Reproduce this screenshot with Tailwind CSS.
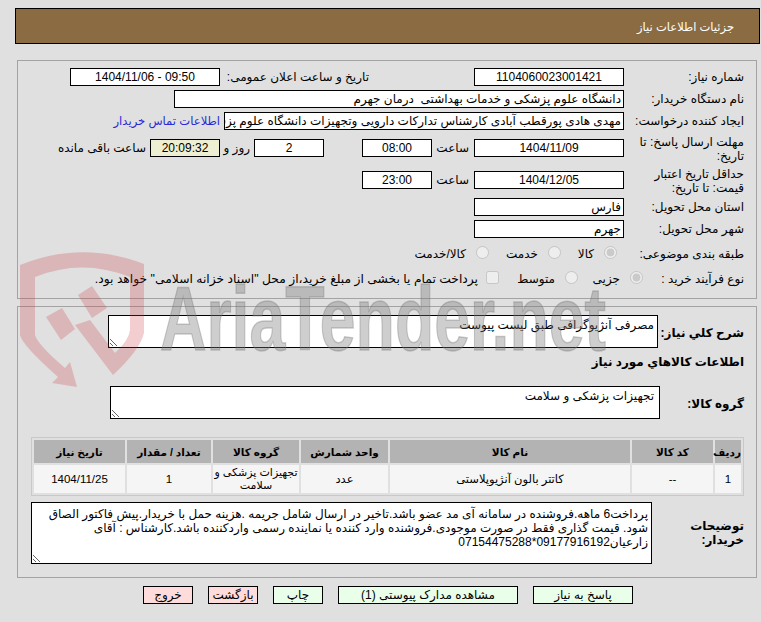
<!DOCTYPE html>
<html lang="fa" dir="rtl">
  <head>
    <meta charset="UTF-8" />
    <title>جزئیات اطلاعات نیاز</title>
    <script src="https://cdn.jsdelivr.net/npm/@tailwindcss/browser@4"></script>
  </head>
  <body class="relative h-[622px] w-[761px] overflow-hidden bg-[#e0e0e0] font-['Liberation_Sans','DejaVu_Sans',sans-serif] text-[12px] leading-[14px] text-black">
    <!-- watermark, sits over the form like in the original -->
    <svg class="pointer-events-none absolute left-0 top-0 z-10" width="761" height="622" viewBox="0 0 761 622">
      <path fill="#c8333a" fill-opacity="0.24" d="M20 265 Q82 240 144 264 L144 333 Q140 350 113 375 L75 325 L90 320 L115 353 Q129 340 130 330 L130 277 Q82 258 35 277 L35 335 Q38 345 65 368 L70 362 L77 387 L52 383 L58 377 Q22 345 20 335 Z" />
      <path fill="#c8333a" fill-opacity="0.24" d="M46 317 L62 308 L75 329 L61 340 Z" />
      <path fill="#c8333a" fill-opacity="0.24" d="M78 295 L92 286 L107 308 L92 318 Z" />
      <text x="160" y="350" direction="ltr" text-anchor="start" textLength="446" lengthAdjust="spacingAndGlyphs" font-family="Liberation Sans" font-weight="700" font-size="90" fill="#777777" fill-opacity="0.36" stroke="#777777" stroke-opacity="0.36" stroke-width="1.5">AriaTender.net</text>
    </svg>

    <header class="ml-[15px] mr-[1px] mt-[8px] flex h-[36px] items-center border border-black bg-[#8b6c42] pr-[25px] pt-[2px] text-[11.5px] text-white">جزئیات اطلاعات نیاز</header>

    <main class="ml-[17px] mr-[4px] mt-[16px]">
      <section class="h-[239px] border border-[#a3a3a3] pr-[12px] pt-[7px]">
        <div class="flex h-[18px] items-center">
          <label class="w-[120px]">شماره نیاز:</label>
          <div class="h-[18px] w-[150px] border border-black bg-white text-center leading-[16px]">1104060023001421</div>
          <label class="mr-[105px] w-[149px]">تاریخ و ساعت اعلان عمومی:</label>
          <div class="h-[18px] w-[150px] border border-black bg-white text-center leading-[16px]" dir="ltr">1404/11/06 - 09:50</div>
        </div>
        <div class="mt-[4px] flex h-[18px] items-center">
          <label class="w-[120px]">نام دستگاه خریدار:</label>
          <div class="h-[18px] w-[450px] whitespace-pre border border-black bg-white px-[2px] leading-[16px]">دانشگاه علوم پزشکی و خدمات بهداشتی  درمان جهرم</div>
        </div>
        <div class="mt-[4px] flex h-[18px] items-center">
          <label class="w-[120px]">ایجاد کننده درخواست:</label>
          <div class="h-[18px] w-[400px] overflow-hidden whitespace-nowrap border border-black bg-white px-[2px] leading-[16px]">مهدی هادی پورقطب آبادی کارشناس تدارکات دارویی وتجهیزات دانشگاه علوم پزشکی جهرم</div>
          <a class="mr-[4px] text-[11.6px] text-[#2a2ad8]">اطلاعات تماس خریدار</a>
        </div>
        <div class="mt-[9px] flex h-[32px] items-start">
          <label class="-mt-[4px] w-[120px]">مهلت ارسال پاسخ: تا<br />تاریخ:</label>
          <div class="h-[18px] w-[150px] border border-black bg-white text-center leading-[16px]">1404/11/09</div>
          <label class="w-[42px] pr-[5px] leading-[18px]">ساعت</label>
          <div class="h-[18px] w-[70px] border border-black bg-white text-center leading-[16px]">08:00</div>
          <div class="mr-[38px] h-[18px] w-[70px] border border-black bg-white text-center leading-[16px]">2</div>
          <label class="w-[34px] pr-[4px] leading-[18px]">روز و</label>
          <div class="h-[18px] w-[70px] border border-black bg-[#eeeed2] text-center leading-[16px]">20:09:32</div>
          <label class="mr-[4px] leading-[18px]">ساعت باقی مانده</label>
        </div>
        <div class="flex h-[27px] items-start">
          <label class="-mt-[4px] w-[120px]">حداقل تاریخ اعتبار<br />قیمت: تا تاریخ:</label>
          <div class="h-[18px] w-[150px] border border-black bg-white text-center leading-[16px]">1404/12/05</div>
          <label class="w-[42px] pr-[5px] leading-[18px]">ساعت</label>
          <div class="h-[18px] w-[70px] border border-black bg-white text-center leading-[16px]">23:00</div>
        </div>
        <div class="flex h-[18px] items-center">
          <label class="w-[120px]">استان محل تحویل:</label>
          <div class="h-[18px] w-[150px] border border-black bg-white px-[2px] leading-[16px]">فارس</div>
        </div>
        <div class="mt-[4px] flex h-[18px] items-center">
          <label class="w-[120px]">شهر محل تحویل:</label>
          <div class="h-[18px] w-[150px] border border-black bg-white px-[2px] leading-[16px]">جهرم</div>
        </div>
        <div class="mt-[7px] flex h-[18px] items-center">
          <label class="w-[127px]">طبقه بندی موضوعی:</label>
          <span class="flex w-[56px] items-center gap-[10px]"><input type="radio" name="cat" disabled checked class="-mt-[3px] size-[13px]" />کالا</span>
          <span class="flex w-[72px] items-center gap-[10px]"><input type="radio" name="cat" disabled class="-mt-[3px] size-[13px]" />خدمت</span>
          <span class="flex items-center gap-[10px]"><input type="radio" name="cat" disabled class="-mt-[3px] size-[13px]" />کالا/خدمت</span>
        </div>
        <div class="mt-[7px] flex h-[18px] items-center">
          <label class="w-[101px]">نوع فرآیند خرید :</label>
          <span class="flex w-[65px] items-center gap-[10px]"><input type="radio" name="kind" disabled checked class="-mt-[3px] size-[13px]" />جزیی</span>
          <span class="flex w-[79px] items-center gap-[10px]"><input type="radio" name="kind" disabled class="-mt-[3px] size-[13px]" />متوسط</span>
          <span class="flex items-center gap-[8px] whitespace-nowrap text-[12.3px]"><input type="checkbox" disabled class="-mt-[4px] size-[13px]" />پرداخت تمام یا بخشی از مبلغ خرید،از محل "اسناد خزانه اسلامی" خواهد بود.</span>
        </div>
      </section>

      <section class="mt-[7px] h-[272px] border border-[#a3a3a3] pr-[12px] pt-[8px]">
        <div class="flex items-center">
          <label class="w-[86px] pt-[3px] font-bold">شرح کلي نیاز:</label>
          <textarea readonly class="h-[33px] w-[550px] border border-black bg-white px-[3px] pt-[2px]">مصرفی آنژیوگرافی طبق لیست پیوست</textarea>
        </div>
        <h2 class="mt-[6px] h-[16px] font-bold leading-[16px]">اطلاعات کالاهاي مورد نیاز</h2>
        <div class="mt-[16px] flex items-center">
          <label class="w-[84px] pt-[3px] font-bold">گروه کالا:</label>
          <textarea readonly class="h-[33px] w-[550px] border border-black bg-white px-[5px] pt-[2px]">تجهیزات پزشکی و سلامت</textarea>
        </div>
        <table class="mt-[18px] w-[713px] table-fixed border-separate border-spacing-[2px] border border-[#c9c9c9] text-center text-[11.5px]">
          <colgroup>
            <col class="w-[26px]" /><col class="w-[81px]" /><col class="w-[240px]" /><col class="w-[87px]" /><col class="w-[86px]" /><col class="w-[84px]" /><col class="w-[91px]" />
          </colgroup>
          <thead>
            <tr class="h-[23px] bg-[#b3b3b3] text-[10.5px] font-bold">
              <th>ردیف</th><th>کد کالا</th><th>نام کالا</th><th>واحد شمارش</th><th>گروه کالا</th><th>تعداد / مقدار</th><th>تاریخ نیاز</th>
            </tr>
          </thead>
          <tbody>
            <tr class="h-[28px] bg-[#f5f5f5]">
              <td>1</td><td>--</td><td>کاتتر بالون آنژیوپلاستی</td><td>عدد</td><td class="whitespace-nowrap text-[11px] leading-[13px]">تجهیزات پزشکی و<br />سلامت</td><td>1</td><td>1404/11/25</td>
            </tr>
          </tbody>
        </table>
        <div class="mt-[6px] flex items-center">
          <label class="w-[92px] font-bold">توضیحات<br />خریدار:</label>
          <textarea readonly class="h-[62px] w-[621px] border border-black bg-white px-[3px] pt-[4px]">پرداخت6 ماهه.فروشنده در سامانه آی مد عضو باشد.تاخیر در ارسال شامل جریمه .هزینه حمل با خریدار.پیش فاکتور الصاق
شود. قیمت گذاری فقط در صورت موجودی.فروشنده وارد کننده یا نماینده رسمی واردکننده باشد.کارشناس : آقای
زارعیان09177916192*07154475288</textarea>
        </div>
      </section>

      <div class="mr-[124px] mt-[8px] flex gap-[15px]">
        <button class="h-[18px] w-[100px] border border-black bg-[#eaffea]">پاسخ به نیاز</button>
        <button class="h-[18px] w-[180px] border border-black bg-[#eaffea]">مشاهده مدارک پیوستی (1)</button>
        <button class="h-[18px] w-[50px] border border-black bg-[#eaffea]">چاپ</button>
        <button class="h-[18px] w-[50px] border border-black bg-[#ffdcdc]">بازگشت</button>
        <button class="h-[18px] w-[50px] border border-black bg-[#ffdcdc]">خروج</button>
      </div>
    </main>
  </body>
</html>
